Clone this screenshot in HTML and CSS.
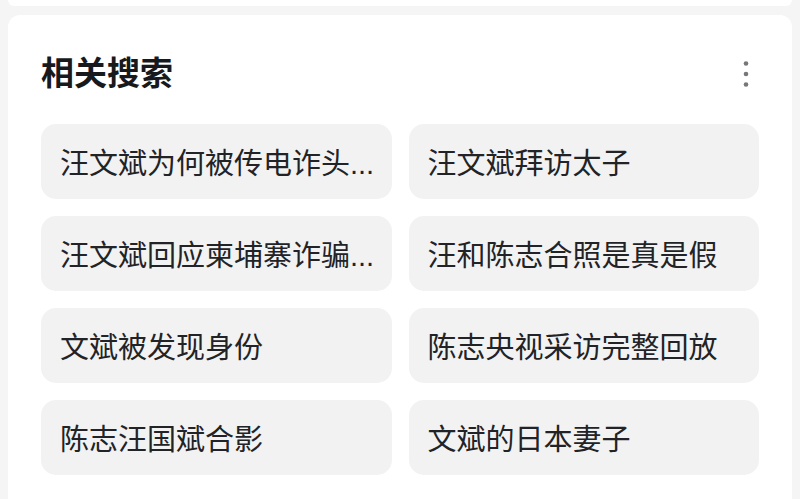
FILE: index.html
```html
<!DOCTYPE html>
<html lang="zh-CN">
<head>
  <meta charset="UTF-8">
  <title>相关搜索</title>
  <link rel="stylesheet" href="styles.css">
</head>
<body>
  <div class="card card-prev"></div>

  <section class="card related">
    <header class="related-head">
      <h2 class="related-title">相关搜索</h2>
      <button class="more-btn" aria-label="更多">
        <svg width="6" height="26" viewBox="0 0 6 26">
          <circle cx="3" cy="2.5" r="2.3"/>
          <circle cx="3" cy="13" r="2.3"/>
          <circle cx="3" cy="23.5" r="2.3"/>
        </svg>
      </button>
    </header>

    <div class="chips">
      <a class="chip" href="#">汪文斌为何被传电诈头...</a>
      <a class="chip" href="#">汪文斌拜访太子</a>
      <a class="chip" href="#">汪文斌回应柬埔寨诈骗...</a>
      <a class="chip" href="#">汪和陈志合照是真是假</a>
      <a class="chip" href="#">文斌被发现身份</a>
      <a class="chip" href="#">陈志央视采访完整回放</a>
      <a class="chip" href="#">陈志汪国斌合影</a>
      <a class="chip" href="#">文斌的日本妻子</a>
    </div>
  </section>
</body>
</html>
```

FILE: styles.css
```css
* { box-sizing: border-box; }
html, body {
  margin: 0; padding: 0;
  background: #f5f5f6;
  font-family: "Liberation Sans", "Noto Sans CJK SC", sans-serif;
  color: #1f1f22;
  overflow: hidden;
  height: 100%;
}
.card {
  background: #fff;
  margin: 0 8px;
  border-radius: 12px;
}
.card-prev {
  height: 6px;
  border-radius: 0 0 12px 12px;
}
.related {
  margin-top: 9px;
  padding: 37px 33px 40px 33px;
}
.related-head {
  display: flex;
  align-items: center;
  justify-content: space-between;
  padding-right: 10px;
  margin-bottom: 28px;
}
.related-title {
  margin: 0;
  font-size: 33px;
  font-weight: 600;
  line-height: 44px;
  color: #18191c;
}
.more-btn {
  border: none;
  background: none;
  padding: 0;
  display: flex;
  fill: #76777b;
  cursor: pointer;
}
.chips {
  display: grid;
  grid-template-columns: 1fr 1fr;
  gap: 17px 17px;
}
.chip {
  display: block;
  height: 75px;
  line-height: 75px;
  padding: 3px 16px 0 19px;
  background: #f2f2f3;
  border-radius: 15px;
  font-size: 29px;
  color: #222326;
  text-decoration: none;
  white-space: nowrap;
  overflow: hidden;
}
```
